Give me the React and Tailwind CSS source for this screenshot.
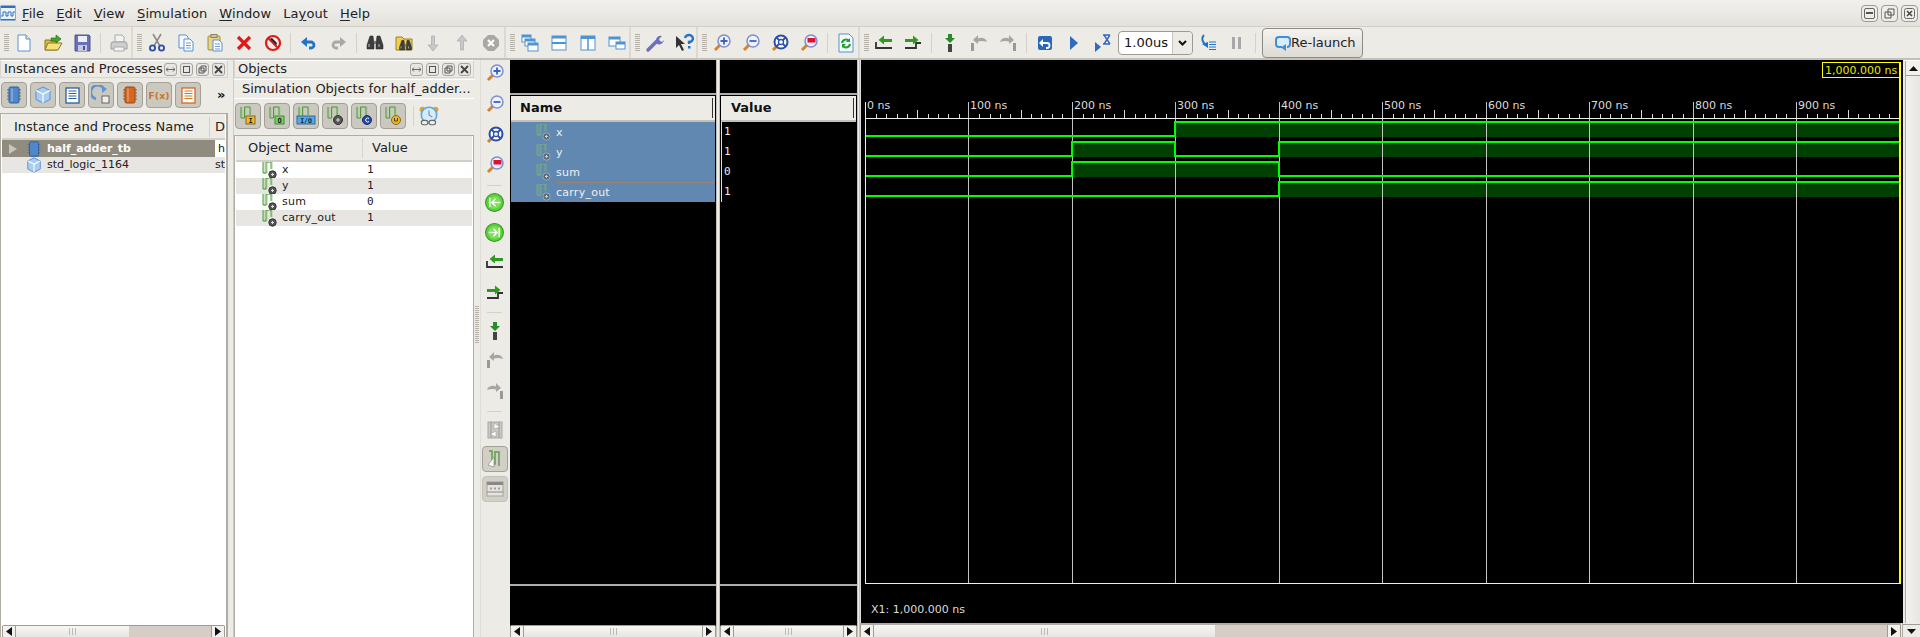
import React from "react";

const I = ({ s = 20, children }) => (
  <svg width={s} height={s} viewBox="0 0 20 20" className="block shrink-0">{children}</svg>
);
const Doc = ({ c = "#5b8fd6", f = "#fff" }) => <><path d="M4 2h8l4 4v12H4z" fill={f} stroke={c} /><path d="M12 2v4h4" fill="#d5e3f6" stroke={c} /></>;
const Mag = ({ children }) => <I><path d="M8 12 3 17" stroke="#d9822b" strokeWidth="3" /><circle cx="12" cy="8" r="6" fill="#eef0fb" stroke="#7f8fd0" strokeWidth="1.5" />{children}</I>;

const New = () => <I><Doc /></I>;
const Open = () => <I><path d="M2 17V7h5l1 1h6v9z" fill="#d8b83a" stroke="#8c7a24" /><path d="M2 17 5 10h14l-4 7z" fill="#f6e07a" stroke="#8c7a24" /><path d="M8 5h5V2l5 4-5 4V8H8z" fill="#4ca02c" stroke="#2a7016" strokeWidth=".7" /></I>;
const Save = () => <I><path d="M3 2h14l1 1v15H3z" fill="#6c70b8" stroke="#50548f" /><rect x="6" y="3" width="9" height="6" fill="#eceef8" /><rect x="6" y="12" width="9" height="6" fill="#c6c8e2" /><rect x="11" y="13" width="2" height="4" fill="#50548f" /></I>;
const Print = () => <I><path d="M6 2h7l2 2v5H6z" fill="#f2f2f2" stroke="#aaa" /><path d="M3 9h14l1 2v5H2v-5z" fill="#cfcfcf" stroke="#a0a0a0" /><path d="M5 14h10v4H5z" fill="#f4f4f4" stroke="#aaa" /></I>;
const Cut = () => <I><path d="M6 1l7 12M14 1 7 13" stroke="#8c8c8c" strokeWidth="1.6" /><circle cx="5.5" cy="15" r="2.6" fill="none" stroke="#2c4fa8" strokeWidth="1.8" /><circle cx="14.5" cy="15" r="2.6" fill="none" stroke="#2c4fa8" strokeWidth="1.8" /></I>;
const Lines = ({ x = 9, y = 9, c = "#6c9ad8", n = 3, w = 5 }) => <path d={Array.from({ length: n }, (_, i) => `M${x} ${y + i * 2.5}h${w}`).join("")} stroke={c} />;
const Copy = () => <I><path d="M3 2h7l2 2v11H3z" fill="#f5f8fd" stroke="#5b8fd6" /><path d="M8 6h6l3 3v9H8z" fill="#fff" stroke="#5b8fd6" /><Lines x={10} y={10} w={5} /></I>;
const Paste = () => <I><rect x="3" y="3" width="12" height="14" rx="1" fill="#e6d58a" stroke="#a08f3c" /><rect x="6" y="1.5" width="6" height="3" fill="#cfc6a8" stroke="#8c8460" /><path d="M8 7h6l3 3v8H8z" fill="#fff" stroke="#5b8fd6" /><Lines x={10} y={11} w={5} /></I>;
const Del = () => <I><path d="M4 4l12 12M16 4 4 16" stroke="#e01818" strokeWidth="3.2" /></I>;
const No = () => <I><path d="M6 6l7 7 1-3-5-5z" fill="#222" /><circle cx="10" cy="10" r="7" fill="none" stroke="#e01818" strokeWidth="2.2" /><path d="M5 5l10 10" stroke="#e01818" strokeWidth="2" /></I>;
const Undo = ({ c = "#2272c8" }) => <I><path d="M6 9h6a3 3 0 0 1 0 6h-2" fill="none" stroke={c} strokeWidth="2.8" /><path d="M8 4v10L2 9z" fill={c} /></I>;
const Redo = () => <I><path d="M14 9H8a3 3 0 0 0 0 6h2" fill="none" stroke="#a8a8a8" strokeWidth="2.8" /><path d="M12 4v10l6-5z" fill="#a8a8a8" /></I>;
const Bino = () => <><path d="M5 3h3l1 7v6H2v-4zM15 3h-3l-1 7v6h7v-4z" fill="#3e3e3e" stroke="#222" strokeWidth=".5" /><path d="M9 8h2v3H9z" fill="#777" /><path d="M4 11v3M14 11v3" stroke="#bbb" /></>;
const Find = () => <I><Bino /></I>;
const FindF = () => <I><path d="M2 17V4h6l2 2h8v11z" fill="#f0d050" stroke="#9a8224" /><g transform="translate(4 5) scale(.75)"><Bino /></g></I>;
const Down = () => <I><path d="M8.500 3h3v9H15l-5 6-5-6h3.500z" fill="#c8c8c8" stroke="#aaa" strokeWidth=".7" /></I>;
const Up = () => <I><path d="M8.500 17h3V8H15l-5-6-5 6h3.500z" fill="#c8c8c8" stroke="#aaa" strokeWidth=".7" /></I>;
const Stop = () => <I><path d="M7 2h6l5 5v6l-5 5H7l-5-5V7z" fill="#aaa8a4" /><path d="M7 7l6 6M13 7l-6 6" stroke="#fff" strokeWidth="2.2" /></I>;
const Win = ({ x, y, w, h }) => <><rect x={x} y={y} width={w} height={h} fill="#fff" stroke="#4f93d3" /><rect x={x} y={y} width={w} height="2.500" fill="#4f93d3" /></>;
const Casc = () => <I><Win x={2} y={2} w={9} h={7} /><Win x={5} y={6} w={10} h={7} /><Win x={8} y={10} w={10} h={8} /></I>;
const HSplit = () => <I><rect x="3" y="3" width="14" height="14" fill="#fff" stroke="#4f93d3" /><rect x="3" y="3" width="14" height="2.500" fill="#4f93d3" /><rect x="3" y="9" width="14" height="2" fill="#4f93d3" /></I>;
const VSplit = () => <I><rect x="3" y="3" width="14" height="14" fill="#fff" stroke="#4f93d3" /><rect x="3" y="3" width="14" height="3" fill="#4f93d3" /><path d="M10 3v14" stroke="#4f93d3" strokeWidth="1.500" /></I>;
const Tile = () => <I><Win x={2} y={4} w={11} h={9} /><Win x={9} y={9} w={9} h={7} /></I>;
const Wrench = () => <I><path d="M3 17l9-9" stroke="#6f6fc0" strokeWidth="3.500" strokeLinecap="round" /><path d="M11 7a4.500 4.500 0 0 1 6-4l-3 3 1 2 2 1 2-2a5 5 0 0 1-7 4z" fill="#6f6fc0" /></I>;
const Help = () => <I><path d="M2 3v12l3-3 3 6 2-1-3-6h4z" fill="#333" /><path d="M11 5a4 3.500 0 1 1 4 4v2" fill="none" stroke="#2272c8" strokeWidth="2.300" /><rect x="14" y="13" width="2.500" height="2.500" fill="#2272c8" /></I>;
const ZIn = () => <Mag><path d="M12 4.500v7M8.500 8h7" stroke="#3a62c4" strokeWidth="1.800" /></Mag>;
const ZOut = () => <Mag><path d="M8.500 8h7" stroke="#3a62c4" strokeWidth="1.800" /></Mag>;
const ZFit = () => <I><path d="M6 14 3 17" stroke="#d9822b" strokeWidth="3" /><circle cx="11" cy="9" r="6.500" fill="#fff" stroke="#2c4fa8" strokeWidth="2" /><circle cx="11" cy="9" r="2.500" fill="#fff" stroke="#2c4fa8" strokeWidth="1.300" /><path d="M6 4l3 3M16 4l-3 3M6 14l3-3M16 14l-3-3" stroke="#2c4fa8" strokeWidth="1.800" /></I>;
const ZRed = () => <Mag><rect x="8.500" y="5" width="8" height="4.500" fill="#e01030" /></Mag>;
const Refresh = () => <I><path d="M3 1h10l4 4v14H3z" fill="#f5f9fe" stroke="#4f93d3" /><path d="M6 10a4 4 0 0 1 7-2M14 11a4 4 0 0 1-7 2" fill="none" stroke="#22a030" strokeWidth="2" /><path d="M14 5v4h-4zM6 15v-4h4z" fill="#22a030" /></I>;
const StepL = () => <I><path d="M2 9v6h16" fill="none" stroke="#333" strokeWidth="1.800" /><path d="M18 6H10V2.500L4.500 7l5.500 4.500V9h8z" fill="#2e9a20" /></I>;
const StepR = () => <I><path d="M2 15h11V10h5" fill="none" stroke="#333" strokeWidth="1.800" /><path d="M2 6h8V2.500L15.500 7 10 11.500V9H2z" fill="#2e9a20" /></I>;
const Inst = () => <I><path d="M8 1h4v4h3l-5 5-5-5h3z" fill="#2a8a2c" /><rect x="8" y="11" width="4" height="8" fill="#444" /></I>;
const Over = () => <I><rect x="2" y="10" width="3" height="8" fill="#999" /><path d="M18 9c-1-4-6-5-9-3.500V2L4 7l5 4V8.500c3-1 6-.5 9 .5z" fill="#a6a6a6" /></I>;
const Ret = () => <I><rect x="15" y="10" width="3" height="8" fill="#999" /><path d="M2 9c1-4 6-5 9-3.500V2l5 5-5 4V8.500c-3-1-6-.5-9 .5z" fill="#a6a6a6" /></I>;
const BackB = () => <I><rect x="3" y="3" width="14" height="14" rx="2" fill="#2a66bc" /><path d="M7 10h5a2.500 2.500 0 0 1 0 5h-1" fill="none" stroke="#fff" strokeWidth="1.800" /><path d="M8 6v8L4 10z" fill="#fff" /></I>;
const Play = () => <I><path d="M6 3l8 7-8 7z" fill="#2f6ac0" /></I>;
const PlayT = () => <I><path d="M2 9l6 5-6 5z" fill="#2f6ac0" /><path d="M10 2h7M10 11h7M11 2l6 9M17 2l-6 9" stroke="#2f6ac0" strokeWidth="1.400" /></I>;
const Break = () => <I><path d="M6 2c-3 3-2 7 2 10" fill="none" stroke="#2272c8" strokeWidth="2" /><path d="M4 11l6-2v6z" fill="#2272c8" /><path d="M11 9h7M11 11.500h7M11 14h7M11 16.500h7" stroke="#2272c8" /></I>;
const Pause = () => <I><rect x="5" y="4" width="3" height="12" fill="#a8a8a8" /><rect x="11" y="4" width="3" height="12" fill="#a8a8a8" /></I>;
const Loop = () => <I><path d="M9 14H6a3 3 0 0 1-3-3V7a3 3 0 0 1 3-3h8a3 3 0 0 1 3 3v4a3 3 0 0 1-3 3" fill="#d9ecfb" stroke="#3d8fd8" strokeWidth="2" /><path d="M13 11v7l-5-3.500z" fill="#3d8fd8" /></I>;

const Chip = ({ c = "#4f87c8", d = "#2f5f98" }) => <I><path d="M3 5h14M3 8h14M3 11h14M3 14h14" stroke="#6a6a6a" /><rect x="5" y="2" width="10" height="16" rx="1.500" fill={c} stroke={d} /><rect x="7" y="3.500" width="2" height="13" fill="#fff" opacity=".25" /></I>;
const Cube = () => <I><path d="M10 2l7 3.500v9L10 18l-7-3.500v-9z" fill="#a8cdf0" stroke="#5b8fd6" /><path d="M3 5.500 10 9l7-3.500M10 9v9" fill="none" stroke="#fff" strokeWidth="1.200" /></I>;
const Page = ({ c = "#2c5f98", l = "#2c5f98" }) => <I><rect x="4" y="3" width="13" height="15" fill="#fff" stroke={c} strokeWidth="1.300" /><Lines x={6.500} y={6} c={l} n={4} w={8} /></I>;
const Reload = () => <I><path d="M13 4a7 7 0 1 0-8 10" fill="none" stroke="#5b95d8" strokeWidth="2.600" /><path d="M11 1l5 3-5 4z" fill="#5b95d8" /><rect x="11" y="11" width="7" height="7" fill="#eee" stroke="#666" /></I>;
const Fx = () => <I><text x="10" y="14" textAnchor="middle" fontSize="9.500" fontWeight="700" fontFamily="DejaVu Sans" fill="#c87828">F(x)</text></I>;

const Pulse = () => <><path d="M3 1v11h3.500V1H12v8" fill="none" stroke="#a6cf94" strokeWidth="1" transform="translate(1 0)" /><path d="M3 1v11h3.500V1H12v8" fill="none" stroke="#4f9a3c" strokeWidth="1" /></>;
const Sig = ({ badge }) => (
  <I><Pulse />
    {badge === "I" && <><rect x="8" y="10" width="9" height="8" fill="#f2b630" stroke="#8a6a10" /><text x="12.500" y="17" textAnchor="middle" fontSize="7" fontWeight="700" fontFamily="DejaVu Sans Mono" fill="#222">I</text></>}
    {badge === "O" && <><rect x="8" y="10" width="9" height="8" fill="#7ed06a" stroke="#3a8a30" /><text x="12.500" y="17" textAnchor="middle" fontSize="7" fontWeight="700" fontFamily="DejaVu Sans Mono" fill="#222">O</text></>}
    {badge === "IO" && <><rect x="1" y="10" width="18" height="8" fill="#58a8e8" stroke="#2a68a8" /><text x="10" y="16.500" textAnchor="middle" fontSize="6.500" fontWeight="700" fontFamily="DejaVu Sans Mono" fill="#123">I/O</text></>}
    {badge === "S" && <><circle cx="13" cy="14" r="4.500" fill="#555" stroke="#333" /><path d="M11 14h4M13 12v4" stroke="#ddd" /></>}
    {badge === "C" && <><circle cx="13" cy="14" r="4.500" fill="#2848a8" stroke="#162a70" /><path d="M15 12.500a2 2 0 1 0 0 3" fill="none" stroke="#fff" /></>}
    {badge === "U" && <><circle cx="13" cy="14" r="4.500" fill="#e8b828" stroke="#8a6a10" /><path d="M11.500 12v3h3v-3" fill="none" stroke="#443" /></>}
  </I>
);
const Clock = () => <I s={22}><circle cx="4" cy="4" r="2.500" fill="#e8a028" /><circle cx="16" cy="4" r="2.500" fill="#e8a028" /><circle cx="10" cy="9" r="7" fill="#d4ecfb" stroke="#5fa8e0" strokeWidth="1.500" /><path d="M10 5v4l3 2" stroke="#7a8aa0" fill="none" /><rect x="3" y="14" width="6" height="4" rx="2" fill="#eee" stroke="#666" /><rect x="10" y="14" width="6" height="4" rx="2" fill="#eee" stroke="#666" /></I>;
const RowSig = ({ dim }) => (
  <svg width="17" height="17" viewBox="0 0 17 17" className="block shrink-0">
    <path d="M3 0v11h3V0h5v7" fill="none" stroke={dim ? "#8ab884" : "#a6cf94"} transform="translate(1 0)" opacity={dim ? 0.5 : 1} />
    <path d="M3 0v11h3V0h5v7" fill="none" stroke={dim ? "#7fae78" : "#4f9a3c"} opacity={dim ? 0.8 : 1} />
    <circle cx="12.500" cy="12.500" r="3.700" fill={dim ? "#5d6e7c" : "#555"} stroke={dim ? "#9ab" : "#333"} />
    <path d="M11 12.500h3M12.500 11v3" stroke={dim ? "#ccc" : "#ddd"} />
  </svg>
);
const ArrowIn = ({ flip }) => <I s={21}><circle cx="10" cy="10" r="8.500" fill="#5fce3c" stroke="#2f9a20" /><circle cx="10" cy="10" r="6" fill="#7ae058" />{flip
  ? <path d="M4.500 10H12M9 6.500 12.500 10 9 13.500M14.500 5.500v9" fill="none" stroke="#fff" strokeWidth="1.400" />
  : <path d="M15.500 10H8M11 6.500 7.500 10l3.500 3.500M5.500 5.500v9" fill="none" stroke="#fff" strokeWidth="1.400" />}</I>;
const Swap = () => <I><rect x="3" y="2" width="14" height="16" fill="#ccc9c3" stroke="#aaa" /><path d="M6 2v16M14 2v16" stroke="#999" /><path d="M9 3l6 4-6 2zM11 11l-6 3 6 3z" fill="#fff" stroke="#999" strokeWidth=".6" /></I>;
const Cursor = () => <I><path d="M4 2h3v13h3V3h4v14" fill="none" stroke="#5fa04a" strokeWidth="1.500" /><path d="M9 8v10l-6-2z" fill="#fff" stroke="#888" strokeWidth=".7" /></I>;
const Tbl = () => <I><rect x="2" y="3" width="16" height="14" fill="#e6e4e0" stroke="#a6a39d" /><rect x="2" y="3" width="16" height="3" fill="#8a8882" /><path d="M2 13h16" stroke="#8a8882" /><path d="M6 8.500v2M10 8.500v2M14 8.500v2" stroke="#8a8882" strokeWidth="1.500" /></I>;

const Grip = () => <div className="h-[17px] w-[5px] shrink-0 bg-[repeating-linear-gradient(0deg,#b5b1a9_0,#b5b1a9_1px,transparent_1px,transparent_2px)]" />;
const Sep = ({ w = "w-[11px]" }) => <div className={`${w} flex justify-center shrink-0`}><div className="h-[20px] w-[1px] bg-[#d4d1cb]" /></div>;
const Cell = ({ children }) => <div className="w-[29px] h-[20px] flex justify-center items-center shrink-0">{children}</div>;
const Sec = ({ w, children }) => <div className={`${w} h-full flex items-center shrink-0 border-r-2 border-[#dcd9d3] pl-[4px]`}>{children}</div>;

const Menu = ({ u, rest, pre = "" }) => <span className="px-[6px] pt-[1px] text-[13px] leading-[26px] tracking-[.1px] text-[#222]">{pre}<span className="underline underline-offset-2">{u}</span>{rest}</span>;

const WBtn = ({ children, s = "w-[17px] h-[17px]" }) => <div className={`${s} rounded-[4px] border border-[#9d9a94] bg-[#efedea] flex items-center justify-center`}>{children}</div>;

const PBtn = ({ children }) => <div className="w-[13px] h-[13px] rounded-[3px] border border-[#a8a59f] bg-[#e8e6e2] flex items-center justify-center">{children}</div>;
const PanelBtns = () => (
  <div className="flex gap-[3px] items-center">
    <PBtn><svg width="9" height="7" viewBox="0 0 9 7"><path d="M0 3.500h9M2 1.500 0 3.500l2 2M7 1.500l2 2-2 2" fill="none" stroke="#666" /></svg></PBtn>
    <PBtn><div className="w-[7px] h-[7px] border border-[#555]" /></PBtn>
    <PBtn><svg width="9" height="9" viewBox="0 0 9 9"><path d="M3 1h5v5H3zM1 3h5v5H1z" fill="none" stroke="#555" /></svg></PBtn>
    <PBtn><svg width="9" height="9" viewBox="0 0 9 9"><path d="M1 1l7 7M8 1 1 8" stroke="#444" strokeWidth="1.800" /></svg></PBtn>
  </div>
);
const TitleBar = ({ t }) => (
  <div className="h-[18px] flex items-center justify-between border border-[#d8d5cf] border-t-white pl-[3px] pr-[2px] text-[13px] text-[#222] bg-[#edebe6]">
    <span className="whitespace-nowrap leading-[16px]">{t}</span><PanelBtns />
  </div>
);
const SqBtn = ({ children }) => <div className="w-[26px] h-[26px] rounded-[4px] border border-[#a3a097] bg-[#cbc8c0] flex items-center justify-center shrink-0">{children}</div>;

const Tri = ({ d }) => <svg width="6" height="9" viewBox="0 0 6 9" className={d === "r" ? "" : "rotate-180"}><path d="M0 0l6 4.500L0 9z" fill="#111" /></svg>;
const SBtn = ({ d }) => <div className="w-[14px] h-full flex items-center justify-center border-x border-[#a09c94] bg-[#f3f1ee] shrink-0"><Tri d={d} /></div>;
const Thumb = ({ w }) => (
  <div className={`${w} h-full bg-gradient-to-b from-[#f8f7f5] to-[#e8e6e2] flex items-center justify-center gap-[2px] shrink-0`}>
    <div className="w-px h-[7px] bg-[#bdbab4]" /><div className="w-px h-[7px] bg-[#bdbab4]" /><div className="w-px h-[7px] bg-[#bdbab4]" />
  </div>
);
const HScroll = ({ thumb, cls = "" }) => (
  <div className={`h-[12px] flex border-t border-[#a09c94] rounded-t-[2px] shrink-0 bg-[#d6cec6] ${cls}`}>
    <SBtn d="l" /><Thumb w={thumb} /><div className={`flex-1 ${thumb === "flex-1" ? "hidden" : ""}`} /><SBtn d="r" />
  </div>
);

const grid = [865, 968, 1072, 1175, 1279, 1382, 1486, 1589, 1693, 1796];
const Wave = () => {
  const ticks = [];
  for (let i = 0; i < 100; i++) {
    const x = Math.round(865.7 + i * 10.34) + 0.5;
    if (i % 10 === 0) continue;
    ticks.push(<path key={i} d={`M${x} ${i % 5 === 0 ? 110 : 114}V118`} stroke="#ddd" />);
  }
  const F = (a, b, y) => <rect x={a} y={y} width={b - a} height="14" fill="#004000" />;
  const g = "#00ff00";
  return (
    <svg width="1043" height="563" viewBox="860 60 1043 563" className="block" shapeRendering="crispEdges">
      {F(1175, 1899, 123)}{F(1072, 1175, 143)}{F(1279, 1899, 143)}{F(1072, 1279, 163)}{F(1279, 1899, 183)}
      {grid.map((x) => <path key={x} d={`M${x + 0.5} 102V583`} stroke={x === 865 ? "#eee" : "#c4c4c4"} />)}
      {ticks}
      <path d="M865 118.500H1900M865 583.500H1900" stroke="#eee" />
      <path d="M866 136H1175V122H1899" fill="none" stroke={g} strokeWidth="2" />
      <path d="M866 156H1072V142H1175V156H1279V142H1899" fill="none" stroke={g} strokeWidth="2" />
      <path d="M866 176H1072V162H1279V176H1899" fill="none" stroke={g} strokeWidth="2" />
      <path d="M866 196H1279V182H1899" fill="none" stroke={g} strokeWidth="2" />
      <g shapeRendering="auto" fontFamily="DejaVu Sans" fontSize="11" fill="#dcdcdc">
        {grid.map((x, i) => <text key={x} x={x + 2} y="109">{i * 100} ns</text>)}
        <text x="871" y="613">X1: 1,000.000 ns</text>
        <text x="1825" y="74" fill="#e6e600">1,000.000 ns</text>
      </g>
      <rect x="1822.500" y="62.500" width="77" height="15" fill="none" stroke="#ffff00" />
      <path d="M1900 62V584" stroke="#ffff00" strokeWidth="2" />
    </svg>
  );
};

const sigs = [["x", "1"], ["y", "1"], ["sum", "0"], ["carry_out", "1"]];
const mono = "[font-family:'DejaVu_Sans_Mono',monospace]";

const vt = [
  [ZIn, "mt-[3px]"], [ZOut, "mt-[11px]"], [ZFit, "mt-[11px]"], [ZRed, "mt-[10px]"], ["s", "mt-[10px]"],
  [() => <ArrowIn />, "mt-[6px]"], [() => <ArrowIn flip />, "mt-[9px]"], [StepL, "mt-[9px]"], [StepR, "mt-[11px]"], ["s", "mt-[9px]"],
  [Inst, "mt-[8px]"], [Over, "mt-[9px]"], [Ret, "mt-[11px]"], ["s", "mt-[10px]"], [Swap, "mt-[8px]"],
];

export default function App() {
  return (
    <div className="w-[1920px] h-[637px] overflow-hidden flex flex-col bg-[#edebe6] text-[#222] [font-family:'DejaVu_Sans',sans-serif]">
      <div className="h-[27px] shrink-0 flex items-center bg-gradient-to-b from-[#f2f0ed] to-[#e5e2dd] border-b border-[#d2cfc9]">
        <svg width="16" height="16" viewBox="0 0 16 16" className="block shrink-0 mb-[1px]"><rect x=".5" y=".5" width="15" height="15" fill="#2f6fc0" /><rect x="1" y="3" width="14" height="11" fill="#eaf2fb" /><path d="M1 11h2V7h3v4h2V7h3v4h2V7h2" fill="none" stroke="#2f6fc0" /></svg>
        <div className="flex ml-[0px]">
          <Menu u="F" rest="ile" /><Menu u="E" rest="dit" /><Menu u="V" rest="iew" /><Menu u="S" rest="imulation" /><Menu u="W" rest="indow" /><Menu pre="La" u="y" rest="out" /><Menu u="H" rest="elp" />
        </div>
        <div className="ml-auto flex gap-[3px] pr-[2px]">
          <WBtn><div className="w-[11px] h-[11px] rounded-[2px] border border-[#666] flex items-center justify-center"><div className="w-[7px] h-[2px] bg-[#555]" /></div></WBtn>
          <WBtn><svg width="11" height="11" viewBox="0 0 11 11"><path d="M4 1h6v6H4zM1 4h6v6H1z" fill="none" stroke="#555" /></svg></WBtn>
          <WBtn><svg width="11" height="11" viewBox="0 0 11 11"><rect x=".5" y=".5" width="10" height="10" rx="2" fill="none" stroke="#666" /><path d="M3 3l5 5M8 3 3 8" stroke="#444" strokeWidth="1.500" /></svg></WBtn>
        </div>
      </div>

      <div className="h-[33px] shrink-0 flex border-b-2 border-[#c4c0b9]">
        <Sec w="w-[133px]"><Grip /><Cell><New /></Cell><Cell><Open /></Cell><Cell><Save /></Cell><Sep w="w-[8px]" /><Cell><Print /></Cell></Sec>
        <Sec w="w-[373px]"><Grip /><Cell><Cut /></Cell><Cell><Copy /></Cell><Cell><Paste /></Cell><Cell><Del /></Cell><Cell><No /></Cell><Sep w="w-[7px]" /><Cell><Undo /></Cell><Cell><Redo /></Cell><Sep w="w-[8px]" /><Cell><Find /></Cell><Cell><FindF /></Cell><Cell><Down /></Cell><Cell><Up /></Cell><Cell><Stop /></Cell></Sec>
        <Sec w="w-[125px]"><Grip /><Cell><Casc /></Cell><Cell><HSplit /></Cell><Cell><VSplit /></Cell><Cell><Tile /></Cell></Sec>
        <Sec w="w-[67px]"><Grip /><Cell><Wrench /></Cell><Cell><Help /></Cell></Sec>
        <Sec w="w-[162px]"><Grip /><Cell><ZIn /></Cell><Cell><ZOut /></Cell><Cell><ZFit /></Cell><Cell><ZRed /></Cell><Sep w="w-[8px]" /><Cell><Refresh /></Cell></Sec>
        <div className="flex-1 h-full flex items-center pl-[4px]">
          <Grip /><Cell><StepL /></Cell><Cell><StepR /></Cell><Sep w="w-[8px]" /><Cell><Inst /></Cell><Cell><Over /></Cell><Cell><Ret /></Cell><Sep w="w-[8px]" /><Cell><BackB /></Cell><Cell><Play /></Cell><Cell><PlayT /></Cell>
          <div className="w-[75px] h-[24px] ml-px rounded-[4px] border border-[#9d9a94] bg-white flex items-stretch shrink-0">
            <span className="flex-1 text-[13px] leading-[22px] pl-[5px] text-[#111]">1.00us</span>
            <div className="w-[20px] border-l border-[#c8c5bf] bg-[#edebe6] rounded-r-[4px] flex items-center justify-center">
              <svg width="9" height="6" viewBox="0 0 9 6"><path d="M1 1l3.500 3.500L8 1" fill="none" stroke="#111" strokeWidth="2" /></svg>
            </div>
          </div>
          <Cell><Break /></Cell><Cell><Pause /></Cell><Sep w="w-[8px]" />
          <div className="w-[101px] h-[30px] ml-[3px] rounded-[4px] border border-[#8f8b84] bg-gradient-to-b from-[#f5f3f0] to-[#dedad4] flex items-center pl-[10px] gap-[1px] shrink-0">
            <Loop /><span className="text-[13px] text-[#222] -ml-[3px]">Re-launch</span>
          </div>
        </div>
      </div>

      <div className="flex-1 flex min-h-0">
        {/* instances */}
        <div className="w-[228px] shrink-0 flex flex-col">
          <TitleBar t="Instances and Processes" />
          <div className="h-[32px] flex items-center gap-[3px] pl-[1px] shrink-0 relative mt-px">
            <SqBtn><Chip /></SqBtn><SqBtn><Cube /></SqBtn><SqBtn><Page /></SqBtn><SqBtn><Reload /></SqBtn><SqBtn><Chip c="#d8661c" d="#9a4410" /></SqBtn><SqBtn><Fx /></SqBtn><SqBtn><Page c="#d8661c" l="#c87828" /></SqBtn>
            <span className="ml-[13px] text-[13px] font-bold text-[#111]">»</span>
          </div>
          <div className="mt-[2px] flex-1 min-h-0 flex flex-col border-l border-r-2 border-t border-[#b0aca4] pl-px pr-px bg-white">
            <div className="h-[26px] pt-[2px] shrink-0 flex items-center bg-[#edebe6] border-b-2 border-[#d2cfc9] text-[13px] overflow-hidden">
              <span className="w-[212px] pl-[12px] border-r border-[#d2cfc9] whitespace-nowrap">Instance and Process Name</span><span className="pl-[5px]">D</span>
            </div>
            <div className="h-[17px] shrink-0 flex text-[11px] leading-[16px]">
              <div className="w-[213px] bg-[#8f8b7e] flex items-center text-white font-bold">
                <svg width="8" height="10" viewBox="0 0 8 10" className="ml-[7px] shrink-0"><path d="M0 0l8 5-8 5z" fill="#c9c6bc" /></svg>
                <div className="ml-[8px]"><svg width="18" height="18" viewBox="0 0 20 20"><path d="M3 5h14M3 8h14M3 11h14M3 14h14" stroke="#5a6a7a" /><rect x="5" y="2" width="10" height="16" rx="1.500" fill="#4f87c8" stroke="#2f5f98" /></svg></div>
                <span className="ml-[4px] pt-px">half_adder_tb</span>
              </div>
              <span className="pl-[3px] text-[#111] pt-px">h</span>
            </div>
            <div className="h-[16px] shrink-0 flex items-center bg-[#e8e6e2] text-[11px] text-[#222]">
              <div className="w-[213px] flex items-center pl-[23px] gap-[4px]"><div className="w-[18px] h-[18px]"><svg width="18" height="18" viewBox="0 0 20 20"><path d="M10 2l7 3.500v9L10 18l-7-3.500v-9z" fill="#a8cdf0" stroke="#5b8fd6" /><path d="M3 5.500 10 9l7-3.500M10 9v9" fill="none" stroke="#fff" strokeWidth="1.200" /></svg></div><span>std_logic_1164</span></div>
              <span className="pl-[3px]">st</span>
            </div>
            <div className="flex-1" />
            <HScroll thumb="w-[113px]" />
          </div>
        </div>
        <div className="w-[6px] shrink-0 border-r border-[#cfccc6]" />

        {/* objects */}
        <div className="w-[240px] shrink-0 flex flex-col">
          <TitleBar t="Objects" />
          <div className="h-[19px] shrink-0 flex items-center pl-[8px] text-[13px] whitespace-nowrap border-t border-white mt-px">Simulation Objects for half_adder...</div>
          <div className="h-[34px] shrink-0 flex items-center gap-[3px] pl-[1px] border-t border-white">
            <SqBtn><Sig badge="I" /></SqBtn><SqBtn><Sig badge="O" /></SqBtn><SqBtn><Sig badge="IO" /></SqBtn><SqBtn><Sig badge="S" /></SqBtn><SqBtn><Sig badge="C" /></SqBtn><SqBtn><Sig badge="U" /></SqBtn>
            <div className="w-px h-[20px] bg-[#d4d1cb] ml-[4px]" /><div className="ml-[1px]"><Clock /></div>
          </div>
          <div className="mt-[3px] flex-1 min-h-0 flex flex-col border-l border-r border-t border-[#b0aca4] bg-white px-px">
            <div className="h-[26px] shrink-0 flex items-center bg-[#edebe6] border-b-2 border-[#d2cfc9] text-[13px]">
              <span className="w-[127px] pl-[12px] border-r border-[#d8d5cf]">Object Name</span><span className="pl-[9px]">Value</span>
            </div>
            {sigs.map(([n, v], i) => (
              <div key={n} className={`h-[16px] shrink-0 flex items-center text-[11px] ${i % 2 ? "bg-[#e8e6e2]" : "bg-white"}`}>
                <div className="w-[131px] flex items-center pl-[24px] gap-[5px]"><RowSig /><span className="tracking-[.25px]">{n}</span></div>
                <span className={`${mono} text-[11px]`}>{v}</span>
              </div>
            ))}
          </div>
        </div>

        {/* vertical toolbar */}
        <div className="w-[6px] shrink-0 flex items-center justify-center pb-[50px]">
          <div className="w-[4px] h-[38px] bg-[repeating-linear-gradient(0deg,#b5b1a9_0,#b5b1a9_1px,transparent_1px,transparent_2px)]" />
        </div>
        <div className="w-[30px] shrink-0 flex flex-col items-center border-l border-[#e0ddd8] pr-[2px]">
          {vt.map(([C, m], i) => C === "s"
            ? <div key={i} className={`${m} w-[15px] h-px bg-[#d4d1cb] shrink-0`} />
            : <div key={i} className={`${m} shrink-0`}><C /></div>)}
          <div className="mt-[6px] w-[26px] h-[26px] rounded-[4px] border border-[#a3a097] bg-[#d2cfc7] flex items-center justify-center shrink-0"><Cursor /></div>
          <div className="mt-[4px] w-[26px] h-[26px] rounded-[4px] border border-[#c4c1b9] bg-[#d2cfc7] flex items-center justify-center shrink-0"><Tbl /></div>
        </div>

        {/* names */}
        <div className="w-[206px] shrink-0 flex flex-col bg-black">
          <div className="h-[33px] shrink-0" />
          <div className="h-[2px] shrink-0 bg-[#b0aea8]" />
          <div className="h-[26px] mt-px mx-px shrink-0 flex items-center justify-between bg-[#edebe6] border-b-2 border-[#c4c0b9] text-[13px] font-bold text-[#111] pl-[9px]">
            <span>Name</span><div className="w-px h-[20px] bg-[#333] mr-[2px]" />
          </div>
          {sigs.map(([n], i) => (
            <div key={n} className="h-[20px] mx-px shrink-0 flex items-center bg-[#6088b0] text-[11px] text-[#f0f0f0]">
              <div className="pl-[23px]"><RowSig dim /></div>
              <span className={`ml-[5px] flex-1 leading-[19px] tracking-[.25px] ${i === 3 ? "border-t border-dotted border-[#a08a78]" : ""}`}>{n}</span>
            </div>
          ))}
          <div className="flex-1" />
          <div className="h-[2px] shrink-0 bg-[#b0aea8]" />
          <div className="h-[39px] shrink-0" />
          <HScroll thumb="flex-1" />
        </div>
        <div className="w-[4px] shrink-0 border-x border-[#c4c0b9]" />

        {/* values */}
        <div className="w-[137px] shrink-0 flex flex-col bg-black">
          <div className="h-[33px] shrink-0" />
          <div className="h-[2px] shrink-0 bg-[#b0aea8]" />
          <div className="h-[26px] mt-px mx-px shrink-0 flex items-center justify-between bg-[#edebe6] border-b-2 border-[#c4c0b9] text-[13px] font-bold text-[#111] pl-[10px]">
            <span>Value</span><div className="w-px h-[20px] bg-[#333] mr-[2px]" />
          </div>
          <div className="ml-[1px] border-l border-[#ddd] shrink-0">
            {sigs.map(([n, v]) => (
              <div key={n} className={`h-[20px] flex items-center pl-[2px] text-[11px] text-[#eee] ${mono}`}>{v}</div>
            ))}
          </div>
          <div className="flex-1" />
          <div className="h-[2px] shrink-0 bg-[#b0aea8]" />
          <div className="h-[39px] shrink-0" />
          <HScroll thumb="flex-1" />
        </div>
        <div className="w-[3px] shrink-0 border-x border-[#c4c0b9]" />

        {/* waveform */}
        <div className="flex-1 min-w-0 flex flex-col">
          <div className="flex-1 min-h-0 flex border-t border-[#fff]">
            <div className="w-[1043px] bg-black shrink-0 border-l border-[#ddd] overflow-hidden -mt-px"><div className="-ml-px"><Wave /></div></div>
            <div className="flex-1 flex flex-col ml-[2px] border-l border-[#b0aca4] bg-gradient-to-r from-[#f4f2ef] to-[#e8e6e2]">
              <div className="h-[15px] flex items-center justify-center border-b border-[#a09c94] rounded-t-[3px] bg-[#f3f1ee]"><svg width="9" height="5" viewBox="0 0 9 5"><path d="M0 5l4.500-5L9 5z" fill="#111" /></svg></div>
              <div className="flex-1" />
            </div>
          </div>
          <div className="h-[14px] shrink-0 flex">
            <div className="w-[1041px] shrink-0 flex border-t-2 border-[#b0aca4] bg-[#d6cec6]">
              <SBtn d="l" /><Thumb w="w-[341px]" /><div className="flex-1" /><SBtn d="r" />
            </div>
            <div className="flex-1 flex flex-col ml-[1px] border-l border-[#b0aca4] bg-[#eeece8]">
              <div className="flex-1" />
              <div className="h-[13px] flex items-center justify-center border-t border-[#a09c94]"><svg width="9" height="5" viewBox="0 0 9 5"><path d="M0 0l4.500 5L9 0z" fill="#111" /></svg></div>
            </div>
          </div>
        </div>
      </div>
    </div>
  );
}
